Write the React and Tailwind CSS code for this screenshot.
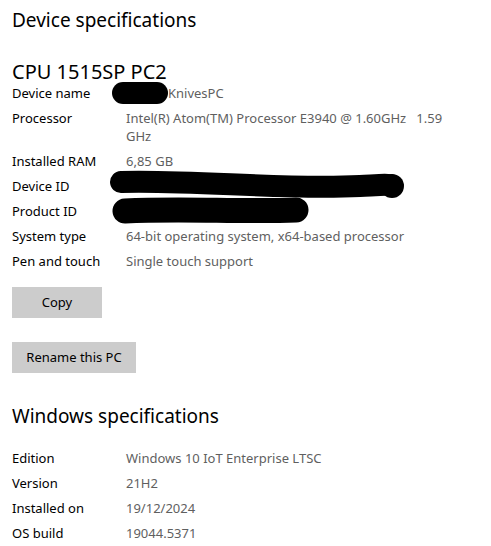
import React from "react";

const deviceRows = [
	["Device name", "KnivesPC"],
	["Processor", "Intel(R) Atom(TM) Processor E3940 @ 1.60GHz\u00a0\u00a0 1.59", "GHz"],
	["Installed RAM", "6,85 GB"],
	["Device ID", ""],
	["Product ID", ""],
	["System type", "64-bit operating system, x64-based processor"],
	["Pen and touch", "Single touch support"],
];

const windowsRows = [
	["Edition", "Windows 10 IoT Enterprise LTSC"],
	["Version", "21H2"],
	["Installed on", "19/12/2024"],
	["OS build", "19044.5371"],
];

function SpecRow({ label, value, extra, indent }) {
	return (
		<div className="flex pt-[4px] pb-[3px] leading-[18px] text-[13px]">
			<div className="w-[114px] shrink-0 text-black">{label}</div>
			<div className={indent ? "pl-[42px] text-[#5f5f5f]" : "text-[#5f5f5f]"}>
				{value}
				{extra && (
					<>
						<br />
						{extra}
					</>
				)}
			</div>
		</div>
	);
}

function Redactions() {
	// black marker scribbles over the private values
	return (
		<svg className="absolute left-0 top-0 pointer-events-none" width="491" height="546">
			<rect x="112" y="82" width="56" height="22" rx="11" fill="#000" />
			<path
				d="M121 182 C 200 180, 280 190, 360 186 C 380 185, 388 184, 392 186"
				stroke="#000"
				strokeWidth="22"
				strokeLinecap="round"
				fill="none"
			/>
			<circle cx="392" cy="186" r="12" fill="#000" />
			<path d="M125 211 C 180 208, 240 212, 296 210" stroke="#000" strokeWidth="25" strokeLinecap="round" fill="none" />
		</svg>
	);
}

export default function App() {
	return (
		<div className="relative w-[491px] h-[546px] bg-white overflow-hidden pl-[12px] text-black" style={{ fontFamily: '"Noto Sans", sans-serif' }}>
			<h1 className="pt-[6px] text-[19px] leading-[28px]">Device specifications</h1>
			<h2 className="mt-[30px] text-[20px] leading-[16px]">CPU 1515SP PC2</h2>
			<div>
				{deviceRows.map(([l, v, e], i) => (
					<SpecRow key={l} label={l} value={v} extra={e} indent={i === 0} />
				))}
			</div>
			<div className="mt-[14px] flex flex-col items-start gap-[24px]">
				<button className="w-[90px] h-[31px] bg-[#cccccc] text-[13px]">Copy</button>
				<button className="w-[124px] h-[31px] bg-[#cccccc] text-[13px]">Rename this PC</button>
			</div>
			<h2 className="mt-[29px] text-[19px] leading-[28px]">Windows specifications</h2>
			<div className="mt-[15px]">
				{windowsRows.map(([l, v]) => (
					<SpecRow key={l} label={l} value={v} />
				))}
			</div>
			<Redactions />
		</div>
	);
}
